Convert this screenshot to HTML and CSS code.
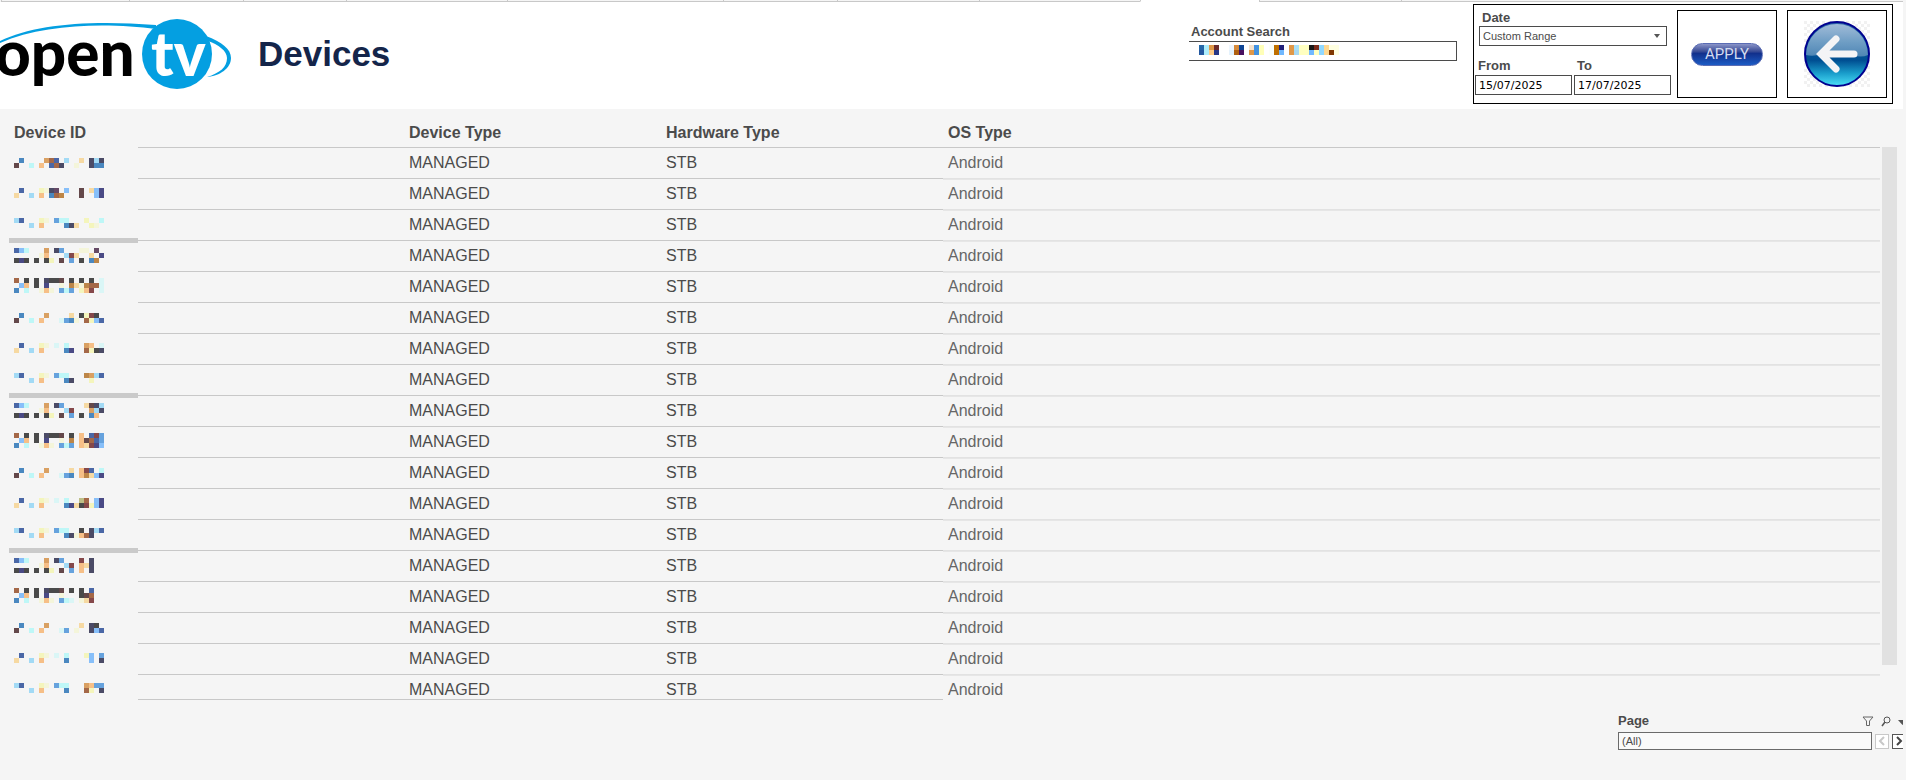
FILE: index.html
```html
<!DOCTYPE html>
<html lang="en">
<head>
    <meta charset="UTF-8">
    <meta name="viewport" content="width=device-width, initial-scale=1.0">
    <title>Devices</title>
    <link rel="stylesheet" href="styles.css">
</head>
<body>
    <div class="dashboard">
        <div class="tab-strip">
            <span class="tab first"></span>
            <span class="tab"></span>
            <span class="tab small"></span>
            <span class="tab large"></span>
            <span class="tab wide"></span>
            <span class="tab"></span>
            <span class="tab medium"></span>
            <span class="tab large"></span>
            <span class="tab active"></span>
            <span class="tab medium"></span>
            <span class="tab rest"></span>
        </div>

        <header class="header">
            <svg class="logo" width="232" height="76" viewBox="0 0 232 76" role="img" aria-label="opentv">
                <path d="M0 25 C35 8 90 4 156 9 V13 C110 7 45 7 0 27 Z" fill="#049fe1"/>
                <path d="M206 20 C222 26 231 33 231 42 C231 52 220 60 207 61 C220 57 227 51 227 42 C227 35 219 29 208 25 Z" fill="#049fe1"/>
                <text class="logo-open" x="-5" y="60">open</text>
                <circle cx="177" cy="38" r="35" fill="#049fe1"/>
                <text class="logo-tv" x="151" y="60">tv</text>
            </svg>
            <h1>Devices</h1>

            <div class="search">
                <label for="account">Account Search</label>
                <div class="search-box">
                    <input type="text" id="account">
                    <svg class="search-mask" id="accountMask" width="140" height="10"></svg>
                </div>
            </div>

            <form class="panel">
                <div class="filters">
                    <div class="date-range">
                        <label for="range">Date</label>
                        <div class="select-box">
                            <select id="range">
                                <option>Custom Range</option>
                            </select>
                            <svg class="arrow" width="6" height="4"><path d="M0 0H6L3 4Z" fill="#555"/></svg>
                        </div>
                    </div>
                    <div class="date-fields">
                        <div>
                            <label for="from">From</label>
                            <input type="text" id="from" value="15/07/2025">
                        </div>
                        <div>
                            <label for="to">To</label>
                            <input type="text" id="to" value="17/07/2025">
                        </div>
                    </div>
                </div>
                <button type="button" class="panel-btn"><span class="pill">APPLY</span></button>
                <button type="button" class="panel-btn" aria-label="Back">
                    <svg width="66" height="66" viewBox="0 0 66 66">
                        <defs>
                            <pattern id="checker" width="6" height="6" patternUnits="userSpaceOnUse">
                                <path d="M0 0h3v3h-3zM3 3h3v3h-3z" fill="#f1f1f1"/>
                            </pattern>
                            <linearGradient id="ball" x1="0" y1="0" x2="0" y2="1">
                                <stop offset="0" stop-color="#2f68a8"/>
                                <stop offset="0.3" stop-color="#0a5a9c"/>
                                <stop offset="0.6" stop-color="#004f92"/>
                                <stop offset="0.8" stop-color="#1a9dcb"/>
                                <stop offset="1" stop-color="#4ce0f8"/>
                            </linearGradient>
                            <linearGradient id="gloss" x1="0" y1="0" x2="0" y2="1">
                                <stop offset="0" stop-color="#fff" stop-opacity="0.55"/>
                                <stop offset="1" stop-color="#fff" stop-opacity="0.3"/>
                            </linearGradient>
                        </defs>
                        <rect width="66" height="66" fill="url(#checker)"/>
                        <circle cx="33" cy="33" r="32" fill="url(#ball)" stroke="#00008f" stroke-width="2"/>
                        <path d="M2 34 A31 31 0 0 1 64 34 Q57 37 48 34 Q33 28 18 33 Q9 36 2 34 Z" fill="url(#gloss)"/>
                        <path d="M50 33 H18 M32 18 L17 33 L32 48" fill="none" stroke="#f4f4f6" stroke-width="7" stroke-linecap="round" stroke-linejoin="miter"/>
                    </svg>
                </button>
            </form>
        </header>

        <main class="table-area">
            <table class="devices">
                <thead>
                    <tr>
                        <th class="id">Device ID</th>
                        <th class="type">Device Type</th>
                        <th class="hardware">Hardware Type</th>
                        <th class="os">OS Type</th>
                    </tr>
                </thead>
                <tbody id="rows"></tbody>
            </table>
            <div class="scrollbar"></div>
        </main>

        <footer class="footer">
            <div class="page-filter">
                <div class="page-head">
                    <label for="page">Page</label>
                    <svg width="12" height="11" viewBox="0 0 12 11"><path d="M1 1H11L7.500 5V9.500H4.500V5Z" fill="none" stroke="#666"/></svg>
                    <svg width="10" height="11" viewBox="0 0 10 11"><circle cx="6" cy="4" r="3" fill="none" stroke="#555"/><path d="M4 6L1 10" stroke="#555" stroke-width="1.500"/></svg>
                    <svg width="9" height="11" viewBox="0 0 9 11"><path d="M0 4H9L4.500 9Z" fill="#555"/></svg>
                </div>
                <div class="page-row">
                    <input type="text" id="page" value="(All)">
                    <button type="button" class="step" disabled aria-label="Previous"><svg width="8" height="10"><path d="M6 1L2 5L6 9" fill="none" stroke="#c8c8c8" stroke-width="2"/></svg></button>
                    <button type="button" class="step next" aria-label="Next"><svg width="8" height="10"><path d="M2 1L6 5L2 9" fill="none" stroke="#444" stroke-width="2"/></svg></button>
                </div>
            </div>
        </footer>
    </div>

    <script src="script.js"></script>
</body>
</html>
```

FILE: styles.css
```css
* {
    margin: 0;
    padding: 0;
    box-sizing: border-box;
}
body {
    font-family: "Liberation Sans", Arial, sans-serif;
    font-size: 16px;
    color: #4b4b4b;
    background: #f5f5f5;
    min-height: 100vh;
}
.dashboard {
    margin-right: 3px;
    overflow: hidden;
}
label {
    display: block;
    font-size: 13px;
    font-weight: bold;
    line-height: 16px;
}
input,
select {
    display: block;
    width: 100%;
    height: 20px;
    border: 1px solid #4b4b4b;
    background: #fff;
    color: #4b4b4b;
    font-family: inherit;
    font-size: 11px;
}

/* sheet tabs cut off at the top edge */
.tab-strip {
    display: flex;
    height: 2px;
    padding-left: 1px;
    background: #f5f5f5;
}
.tab {
    width: 114px;
    border-left: 1px solid #c8c8c8;
    border-bottom: 1px solid #c8c8c8;
}
.tab.first {
    width: 128px;
}
.tab.small {
    width: 103px;
}
.tab.medium {
    width: 142px;
}
.tab.large {
    width: 161px;
}
.tab.wide {
    width: 216px;
}
.tab.active {
    width: 119px;
    background: #fff;
    border-bottom-color: #fff;
}
.tab.rest {
    flex: 1;
}

.header {
    display: flex;
    align-items: flex-start;
    height: 107px;
    padding-right: 10px;
    background: #fff;
}
.logo {
    margin-top: 14px;
}
.logo-open {
    font-family: Lato, sans-serif;
    font-weight: 900;
    font-size: 62px;
    fill: #000;
}
.logo-tv {
    font-family: Lato, sans-serif;
    font-weight: 900;
    font-size: 60px;
    fill: #fff;
}
h1 {
    margin: 32px auto 0 26px;
    font-size: 35px;
    line-height: 40px;
    color: #14254a;
}
.search {
    width: 268px;
    margin: 22px 16px 0 0;
}
.search label {
    padding-left: 2px;
}
.search-box {
    position: relative;
    margin-top: 1px;
}
.search-box input {
    border-left: none;
}
.search-mask {
    position: absolute;
    left: 10px;
    top: 4px;
}

.panel {
    display: flex;
    width: 420px;
    height: 100px;
    margin-top: 2px;
    padding: 5px 5px 5px 1px;
    border: 1px solid #000;
}
.filters {
    width: 196px;
    margin-right: 6px;
}
.date-range {
    width: 192px;
    padding-left: 4px;
}
.date-range label {
    padding-left: 3px;
}
.select-box {
    position: relative;
}
select {
    appearance: none;
    padding-left: 3px;
}
.arrow {
    position: absolute;
    right: 7px;
    top: 8px;
}
.date-fields {
    display: flex;
    gap: 2px;
    margin-top: 12px;
}
.date-fields div {
    flex: 1;
}
.date-fields label {
    padding-left: 3px;
    margin-bottom: 1px;
}
.date-fields input {
    padding-left: 3px;
    color: #000;
    font-family: "DejaVu Sans", Verdana, sans-serif;
}
.panel-btn {
    display: flex;
    flex: none;
    align-items: center;
    justify-content: center;
    width: 100px;
    height: 88px;
    border: 1px solid #000;
    background: #fff;
}
.panel-btn + .panel-btn {
    margin-left: 10px;
}
.pill {
    width: 72px;
    border: 1px solid #5a6cb4;
    border-radius: 12px;
    background: linear-gradient(#8a94c8, #3a4c96 35%, #12308c 45%, #1c5cc4);
    color: #d4dcf0;
    font-family: Roboto, sans-serif;
    font-size: 15px;
    line-height: 21px;
}

.table-area {
    display: flex;
    gap: 2px;
    padding: 0 6px 0 9px;
}
.devices {
    flex: 1;
    table-layout: fixed;
    border-collapse: separate;
    border-spacing: 0;
}
.devices th {
    padding: 15px 0 5px;
    border-bottom: 1px solid #c8c8c8;
    line-height: 18px;
    text-align: left;
}
.devices td {
    padding: 6px 0;
    border-bottom: 1px solid #c8c8c8;
    line-height: 18px;
}
.devices .id {
    position: relative;
    width: 129px;
    padding-left: 5px;
    border-bottom: none;
    vertical-align: top;
}
.devices td.id {
    padding-top: 0;
    padding-bottom: 0;
}
.devices td.id svg {
    display: block;
}
.devices .type {
    width: 528px;
    padding-left: 271px;
}
.devices .hardware {
    width: 277px;
}
.devices .os {
    padding-left: 5px;
}
.devices td.os {
    border-bottom-color: #e2e2e2;
    box-shadow: 0 1px #e6e6e6;
    color: #666;
}
.devices tr:last-child td {
    padding-bottom: 0;
}
.devices tbody tr:last-child td.os {
    border-bottom-color: transparent;
    box-shadow: none;
}
.page-break .id::before {
    content: "";
    position: absolute;
    left: 0;
    top: -3px;
    width: 100%;
    height: 5px;
    background: #cacaca;
}
.scrollbar {
    width: 15px;
    margin: 38px 0 35px;
    background: #e1e1e1;
}

.footer {
    display: flex;
    justify-content: flex-end;
    padding: 12px 0 28px;
}
.page-filter {
    width: 285px;
}
.page-head {
    display: flex;
    align-items: center;
    gap: 7px;
    width: 289px;
    height: 18px;
    margin-bottom: 2px;
}
.page-head label {
    flex: 1;
}
.page-row {
    display: flex;
    align-items: center;
    gap: 3px;
}
.page-row input {
    flex: none;
    width: 254px;
    height: 18px;
    padding-left: 3px;
    border-color: #6b6b6b;
    background: #fafafa;
}
.step {
    display: flex;
    flex: none;
    align-items: center;
    justify-content: center;
    width: 14px;
    height: 15px;
    border: 1px solid #c8c8c8;
    background: #fff;
}
.step.next {
    border-color: #555;
}
```

FILE: script.js
```js
// each letter is one 5px block of a masked id
const palette = {
    b: '#4a67a6', B: '#4a88c0', k: '#4a4a4a', n: '#4b4b66', i: '#4a4a85',
    u: '#64484a', r: '#a46848', o: '#d9a062', p: '#f6bf87', w: '#f6d9a2',
    y: '#f4f5bc', c: '#f4f5da', s: '#a2daf5', l: '#87bff9', m: '#66a2dd',
    a: '#bef7f7', f: '#daf6f6', g: '#bd8648', v: '#664a66', d: '#85484a',
    q: '#bebf86'
};

const ids = [
    ['.B....orb.s..w.nsn', 'u..a.p.brn..c..nBB'],
    ['.b...ycnv.l..u.wli', 'w..s.p.Brg...u..li'],
    ['sb...yc.maa...y..a', '...s.p....Bnw..yc.'],
    ['bla...o.nm...cc.v.', '.....cp...sdw..w.i', 'kik.k.ky.u.m.k.Bg.'],
    ['r.k.k.nkku.k.k.k.f', '.lp.k.i..c.gwcgrrf', 'B.a..cpc.mam.ypd.f'],
    ['.B....o....w.kydk.', 'u..a.p...fmBc.rylb'],
    ['.b...yc.f.a...op.f', 'w..s.p....Bi..rykn'],
    ['sb...yc.maa...gosb', '...s.p....Bn...y..'],
    ['bla...o.nm....wuns', '.....cp...sd...osn', 'kik.k.ky.u.m.k.Bp.'],
    ['r.k.k.nkku.k.p.bdm', '.lp.k.i..c.g.purbm', 'B.a..cpc.mam.pwdil'],
    ['.B....o....w.pdb.a', 'u..a.p...fmB.pgwli'],
    ['.b...yc.f.a..qr.li', 'w..s.p....Biwkdyli'],
    ['sb...yc.maa..k.nsb', '...s.p....Bncprn..'],
    ['bla...o.nm...d.n..', '.....cp...sd.pwn..', 'kik.k.ky.u.m.p.n..'],
    ['r.k.k.nkku.k.k.b..', '.lp.k.i..c...kur..', 'B.a..cpc.maf.cwd..'],
    ['.B....o......w.nk.', 'u..a.p...fm.c..nlb'],
    ['.b...yc.f.a...yl.m', 'w..s.p....B....l.n'],
    ['sb...yc.maa...opmm', '...s.p....B...ry.n']
];

function block(x, y, color) {
    return `<rect x="${x * 5}" y="${y}" width="5" height="5" fill="${color}"/>`;
}

function mask(lines, top) {
    let out = '';
    lines.forEach((line, y) => {
        [...line].forEach((ch, x) => {
            if (palette[ch]) out += block(x, top + y * 5, palette[ch]);
        });
    });
    return `<svg width="90" height="24" shape-rendering="crispEdges">${out}</svg>`;
}

document.getElementById('rows').innerHTML = ids.map((lines, i) => `
    <tr class="${[3, 8, 13].includes(i) ? 'page-break' : ''}">
        <td class="id">${mask(lines, 10 - i % 5)}</td>
        <td class="type">MANAGED</td>
        <td class="hardware">STB</td>
        <td class="os">Android</td>
    </tr>`).join('');

// column, upper colour, lower colour
const account = [
    [0, '#2668a8', '#2458a0'], [1, '#aeeefc', '#aeeefc'], [2, '#e09848', '#ffcc88'], [3, '#6b2b2b', '#283888'],
    [6, '#eef6ff', '#e4f2fd'], [7, '#d68a3a', '#b06010'], [8, '#0e4494', '#481060'],
    [10, '#f5e2cc', '#e09848'], [11, '#4492e0', '#4492e0'], [12, '#ffffb8', '#ffffb8'],
    [14, '#fafffa', '#fafffa'], [15, '#c07000', '#c07000'], [16, '#20207a', '#70b8ff'],
    [18, '#e09848', '#e09848'], [19, '#a8e0f8', '#a8d8f0'], [20, '#ffffc0', '#ffffc0'], [21, '#ffffc0', '#ffffc0'],
    [22, '#181818', '#70b8ff'], [23, '#7a2a18', '#ffffc0'], [24, '#90d8ff', '#90d8ff'], [25, '#ffd890', '#ffd890'],
    [26, '#ffffe0', '#803800'], [27, '#ffffe0', '#ffffe0']
];
document.getElementById('accountMask').innerHTML =
    account.map(([x, upper, lower]) => block(x, 0, upper) + block(x, 5, lower)).join('');
```
